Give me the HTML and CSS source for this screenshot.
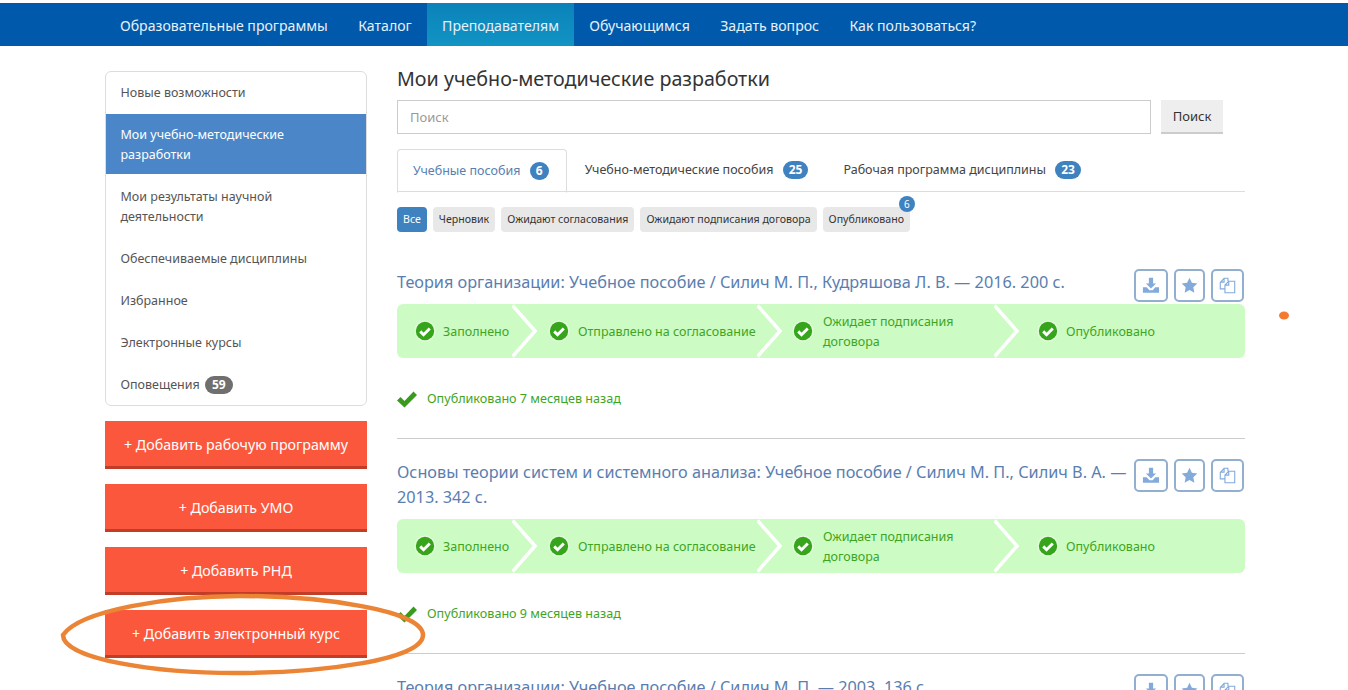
FILE: index.html
```html
<!DOCTYPE html>
<html lang="ru">
<head>
    <meta charset="UTF-8">
    <title>Мои учебно-методические разработки</title>
    <link rel="stylesheet" href="styles.css">
</head>
<body>
    <svg width="0" height="0" class="defs">
        <symbol id="ok" viewBox="0 0 24 24">
            <circle cx="12" cy="12" r="11.5" fill="#e6fbe0"/>
            <circle cx="12" cy="12" r="10" fill="#36a51c"/>
            <path d="M6.8 12.4l3.6 3.6 6.8-6.8" fill="none" stroke="#fff" stroke-width="3.2"/>
        </symbol>
        <symbol id="chev" viewBox="0 0 25 54">
            <path d="M0.500 1.500l22.500 25.500L0.500 52.500" fill="none" stroke="#fff" stroke-width="3.500"/>
        </symbol>
        <symbol id="check" viewBox="0 0 20 18">
            <path d="M0 10.500L3.500 7l4 4L16.500 1.500 20 5 7.500 17.500z" fill="#3a9a1e"/>
        </symbol>
        <symbol id="dl" viewBox="0 0 20 20">
            <path d="M7.500 1h5v6.500h3.500L10 13.500 4 7.500h3.500z" fill="#82abdc"/>
            <path d="M0.500 12h4.500l3 3.500h4l3-3.500h4.500v6.500h-19z" fill="#82abdc"/>
        </symbol>
        <symbol id="star" viewBox="0 0 20 20">
            <path d="M10 1l2.800 5.900 6.400.8-4.700 4.400 1.200 6.400-5.700-3.100-5.700 3.100 1.200-6.400L.8 7.700l6.400-.8z" fill="#82abdc"/>
        </symbol>
        <symbol id="copy" viewBox="0 0 20 20">
            <path d="M7 14H1.500V6.500L6 1.500h4.500V5M6 1.500V6H1.500M7 14V9.500L11.500 5h7v13.500H7zM11.500 5v4.500H7" fill="none" stroke="#82abdc" stroke-width="1.300"/>
        </symbol>
    </svg>

    <nav class="topnav">
        <a href="#">Образовательные программы</a>
        <a href="#">Каталог</a>
        <a href="#" class="current">Преподавателям</a>
        <a href="#">Обучающимся</a>
        <a href="#">Задать вопрос</a>
        <a href="#">Как пользоваться?</a>
    </nav>

    <div class="page">
        <aside class="sidebar">
            <ul class="side-menu">
                <li><a href="#">Новые возможности</a></li>
                <li class="active"><a href="#">Мои учебно-методические разработки</a></li>
                <li><a href="#">Мои результаты научной деятельности</a></li>
                <li><a href="#">Обеспечиваемые дисциплины</a></li>
                <li><a href="#">Избранное</a></li>
                <li><a href="#">Электронные курсы</a></li>
                <li><a href="#">Оповещения <span class="count">59</span></a></li>
            </ul>
            <a href="#" class="add-btn">+ Добавить рабочую программу</a>
            <a href="#" class="add-btn">+ Добавить УМО</a>
            <a href="#" class="add-btn">+ Добавить РНД</a>
            <a href="#" class="add-btn">+ Добавить электронный курс</a>
        </aside>

        <main class="content">
            <h1>Мои учебно-методические разработки</h1>
            <form class="search">
                <input type="text" placeholder="Поиск">
                <button type="button">Поиск</button>
            </form>

            <div class="tabs">
                <a href="#" class="tab active">Учебные пособия <span class="badge">6</span></a>
                <a href="#" class="tab">Учебно-методические пособия <span class="badge">25</span></a>
                <a href="#" class="tab">Рабочая программа дисциплины <span class="badge">23</span></a>
            </div>

            <div class="filters">
                <a href="#" class="pill on">Все</a>
                <a href="#" class="pill">Черновик</a>
                <a href="#" class="pill">Ожидают согласования</a>
                <a href="#" class="pill">Ожидают подписания договора</a>
                <a href="#" class="pill">Опубликовано<span class="pill-count">6</span></a>
            </div>

            <article class="item">
                <div class="item-head">
                    <a href="#" class="item-title">Теория организации: Учебное пособие / Силич М. П., Кудряшова Л. В. — 2016. 200 с.</a>
                    <div class="item-tools">
                        <a href="#"><svg class="i-dl"><use href="#dl"/></svg></a>
                        <a href="#"><svg class="i-star"><use href="#star"/></svg></a>
                        <a href="#"><svg class="i-copy"><use href="#copy"/></svg></a>
                    </div>
                </div>
                <div class="steps">
                    <div class="step s1"><svg><use href="#ok"/></svg><span>Заполнено</span></div>
                    <svg class="chev"><use href="#chev"/></svg>
                    <div class="step s2"><svg><use href="#ok"/></svg><span>Отправлено на согласование</span></div>
                    <svg class="chev"><use href="#chev"/></svg>
                    <div class="step s3"><svg><use href="#ok"/></svg><span>Ожидает подписания договора</span></div>
                    <svg class="chev"><use href="#chev"/></svg>
                    <div class="step s4"><svg><use href="#ok"/></svg><span>Опубликовано</span></div>
                </div>
                <div class="status"><svg><use href="#check"/></svg>Опубликовано 7 месяцев назад</div>
            </article>

            <article class="item">
                <div class="item-head">
                    <a href="#" class="item-title">Основы теории систем и системного анализа: Учебное пособие / Силич М. П., Силич В. А. — 2013. 342 с.</a>
                    <div class="item-tools">
                        <a href="#"><svg class="i-dl"><use href="#dl"/></svg></a>
                        <a href="#"><svg class="i-star"><use href="#star"/></svg></a>
                        <a href="#"><svg class="i-copy"><use href="#copy"/></svg></a>
                    </div>
                </div>
                <div class="steps">
                    <div class="step s1"><svg><use href="#ok"/></svg><span>Заполнено</span></div>
                    <svg class="chev"><use href="#chev"/></svg>
                    <div class="step s2"><svg><use href="#ok"/></svg><span>Отправлено на согласование</span></div>
                    <svg class="chev"><use href="#chev"/></svg>
                    <div class="step s3"><svg><use href="#ok"/></svg><span>Ожидает подписания договора</span></div>
                    <svg class="chev"><use href="#chev"/></svg>
                    <div class="step s4"><svg><use href="#ok"/></svg><span>Опубликовано</span></div>
                </div>
                <div class="status"><svg><use href="#check"/></svg>Опубликовано 9 месяцев назад</div>
            </article>

            <article class="item">
                <div class="item-head">
                    <a href="#" class="item-title">Теория организации: Учебное пособие / Силич М. П. — 2003. 136 с.</a>
                    <div class="item-tools">
                        <a href="#"><svg class="i-dl"><use href="#dl"/></svg></a>
                        <a href="#"><svg class="i-star"><use href="#star"/></svg></a>
                        <a href="#"><svg class="i-copy"><use href="#copy"/></svg></a>
                    </div>
                </div>
            </article>
        </main>
    </div>

    <!-- hand-drawn marks on top of the screenshot -->
    <svg class="marks" width="1348" height="690">
        <path d="M63 635C80 610 170 596 240 596C320 596 423 610 423 635C423 660 320 673 235 673C160 673 63 660 63 635Z" fill="none" stroke="#ec8436" stroke-width="4.500"/>
        <ellipse cx="1284" cy="315.500" rx="5" ry="4" fill="#f47a30"/>
    </svg>
</body>
</html>
```

FILE: styles.css
```css
html, body {
    height: 690px;
    overflow: hidden;
}
body {
    margin: 0;
    font-family: "Noto Sans", "Open Sans", sans-serif;
    font-size: 13px;
    color: #333;
    background-color: #fff;
    position: relative;
}
a {
    text-decoration: none;
    color: inherit;
}
.defs {
    position: absolute;
}

/* top menu */
.topnav {
    display: flex;
    margin-top: 3px;
    padding-left: 104.800px;
    height: 43px;
    background-color: #0059aa;
}
.topnav a {
    padding: 0 15.200px;
    line-height: 45px;
    font-size: 14.100px;
    color: #e6f1fa;
}
.topnav a.current {
    background: linear-gradient(#0b82b9, #1194c4);
}

.page {
    display: flex;
    gap: 30px;
    padding: 25px 103px 0 105px;
}

/* left column */
.sidebar {
    flex: 0 0 262px;
    display: flex;
    flex-direction: column;
}
.side-menu {
    list-style: none;
    margin: 0 0 15px;
    padding: 0;
    border: 1px solid #ddd;
    border-radius: 6px;
}
.side-menu li {
    margin-bottom: 2px;
}
.side-menu li:last-child {
    margin-bottom: 1px;
}
.side-menu li a {
    display: block;
    padding: 11px 15px 9px 14.500px;
    line-height: 20px;
    font-size: 12.500px;
    color: #555;
}
.side-menu li.active {
    background-color: #4a86c8;
}
.side-menu li.active a {
    color: #fff;
    padding-right: 60px;
}
.count {
    display: inline-block;
    margin-left: 2px;
    padding: 0 7px;
    border-radius: 10px;
    background-color: #6f6f6f;
    color: #fff;
    font-size: 12px;
    font-weight: 700;
    line-height: 18px;
}
.add-btn {
    display: block;
    height: 45px;
    line-height: 47px;
    margin-bottom: 15px;
    border-bottom: 3px solid #c23d28;
    background-color: #fb573c;
    color: #fff;
    font-size: 14.250px;
    text-align: center;
}

/* right column */
.content {
    flex: 1;
    min-width: 0;
}
.content h1 {
    margin: -6px 0 8px;
    font-size: 19.700px;
    font-weight: 400;
    line-height: 27px;
    color: #333;
}
.search {
    display: flex;
    gap: 10px;
    margin: 0 22px 15px 0;
}
.search input {
    flex: 1;
    height: 34px;
    box-sizing: border-box;
    padding: 0 12px;
    border: 1px solid #ccc;
    font: inherit;
}
.search input::placeholder {
    color: #999;
}
.search button {
    width: 62px;
    height: 34px;
    border: none;
    border-bottom: 2px solid #ccc;
    background-color: #eee;
    color: #333;
    font: inherit;
}

.tabs {
    display: flex;
    height: 42px;
    border-bottom: 1px solid #ddd;
}
.tab {
    padding: 0 17px 0 18px;
    line-height: 42px;
    color: #444;
    font-size: 12.500px;
    white-space: nowrap;
}
.tab.active {
    height: 42px;
    padding-left: 15px;
    border: 1px solid #ddd;
    border-bottom-color: #fff;
    border-radius: 4px 4px 0 0;
    color: #5a7eb0;
}
.badge {
    display: inline-block;
    margin-left: 6px;
    padding: 0 6px;
    min-width: 7px;
    border-radius: 10px;
    background-color: #3f82c0;
    color: #fff;
    font-size: 12px;
    font-weight: 700;
    line-height: 18px;
    text-align: center;
}

.filters {
    display: flex;
    gap: 6px;
    margin: 15px 0 38px;
}
.pill {
    position: relative;
    padding: 0 6px;
    height: 25px;
    line-height: 25px;
    border-radius: 4px;
    background-color: #e8e8e8;
    color: #333;
    font-size: 10.600px;
}
.pill.on {
    background-color: #3f82c0;
    color: #fff;
}
.pill-count {
    position: absolute;
    top: -11px;
    right: -5px;
    width: 16px;
    height: 16px;
    border-radius: 50%;
    background-color: #3f82c0;
    color: #fff;
    font-size: 10px;
    line-height: 16px;
    text-align: center;
}

.item {
    padding-bottom: 29px;
    border-bottom: 1px solid #ccc;
    margin-bottom: 21px;
}
.item-head {
    display: flex;
    justify-content: space-between;
    align-items: flex-start;
    gap: 3px;
}
.item-title {
    font-size: 16.250px;
    line-height: 25px;
    color: #5a7eb0;
}
.item-tools {
    flex: 0 0 auto;
    display: flex;
    gap: 6px;
    padding-right: 1px;
    margin: -1px 0 -7px;
}
.item-tools a {
    display: flex;
    align-items: center;
    justify-content: center;
    height: 29px;
    padding: 0 5px;
    border: 2px solid #93afd0;
    border-radius: 5px;
}
.item-tools svg {
    height: 17px;
}
.item-tools .i-dl { width: 20px; }
.item-tools .i-star { width: 17px; }
.item-tools .i-copy { width: 19px; }

.steps {
    display: flex;
    height: 54px;
    margin-top: 9px;
    border-radius: 6px;
    background-color: #ccfcc4;
}
.step {
    display: flex;
    align-items: center;
    gap: 7px;
    box-sizing: border-box;
    color: #3fa51f;
    font-size: 12.500px;
    line-height: 20px;
}
.step span {
    margin-top: 2px;
}
.step svg {
    flex: 0 0 22px;
    width: 22px;
    height: 22px;
}
.step.s1 { width: 115px; padding-left: 17px; }
.step.s2 { width: 220px; padding-left: 11px; gap: 8px; }
.step.s3 { width: 212px; padding-left: 10px; gap: 9px; }
.step.s4 { flex: 1; padding-left: 18px; }
.chev {
    flex: 0 0 25px;
    width: 25px;
    height: 54px;
}

.status {
    display: flex;
    align-items: center;
    gap: 10px;
    margin-top: 31px;
    color: #3fa51f;
    font-size: 12.600px;
    line-height: 20px;
}
.status svg {
    width: 20px;
    height: 18px;
}

.marks {
    position: absolute;
    top: 0;
    left: 0;
    pointer-events: none;
}
```
